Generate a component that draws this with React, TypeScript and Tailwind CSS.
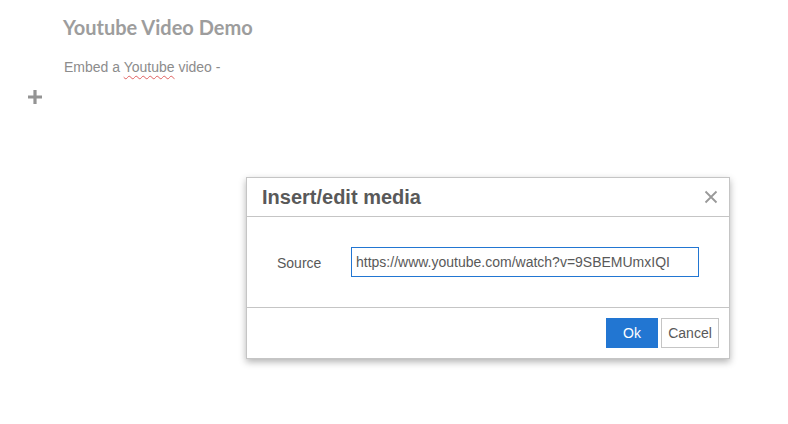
import React from 'react'

const App = () => {
    return (
        <div className="relative w-[788px] h-[424px] bg-white overflow-hidden" style={{ fontFamily: '"Liberation Sans", Arial, sans-serif' }}>
            <div className="pl-[63px] pt-[15px]">
                <h1 className="text-[20px] leading-[24px] font-bold text-[#9d9d9d] font-['Lato',sans-serif]">Youtube Video Demo</h1>
                <p className="mt-[20px] ml-[1px] text-[14px] leading-[16px] text-[#8c8c8c]">
                    Embed a <span className="underline decoration-wavy decoration-[#e06060] decoration-1 underline-offset-[3px]">Youtube</span> video -
                </p>
            </div>
            <div className="ml-[27px] mt-[14px] w-[16px] h-[16px] flex items-center justify-center">
                <svg width="16" height="16" viewBox="0 0 16 16">
                    <path d="M8 1v14M1 8h14" stroke="#949494" strokeWidth="3.2" />
                </svg>
            </div>

            <div className="absolute left-[246px] top-[177px] w-[484px] bg-white border border-[#c5c5c5] shadow-[0_3px_7px_rgba(0,0,0,0.3)]">
                <div className="h-[39px] flex items-center justify-between pl-[15px] pr-[11px] border-b border-[#c5c5c5]">
                    <span className="text-[20px] font-bold text-[#595959]">Insert/edit media</span>
                    <svg width="14" height="14" viewBox="0 0 14 14">
                        <path d="M1.5 1.5l11 11M12.5 1.5l-11 11" stroke="#999999" strokeWidth="1.8" />
                    </svg>
                </div>
                <div className="h-[90px] flex items-start pt-[30px] pl-[30px]">
                    <span className="w-[74px] mt-[6px] text-[14px] text-[#595959]">Source</span>
                    <div className="w-[348px] h-[30px] border border-[#2276d2] flex items-center px-[4px] text-[14px] text-[#595959]">
                        https://www.youtube.com/watch?v=9SBEMUmxIQI
                    </div>
                </div>
                <div className="h-[51px] border-t border-[#c5c5c5] flex items-start justify-end pt-[10px] pr-[10px] gap-[3px]">
                    <button className="w-[52px] h-[30px] bg-[#2276d2] text-white text-[14px]">Ok</button>
                    <button className="w-[58px] h-[30px] bg-white border border-[#c5c5c5] text-[#595959] text-[14px]">Cancel</button>
                </div>
            </div>
        </div>
    )
}

export default App
